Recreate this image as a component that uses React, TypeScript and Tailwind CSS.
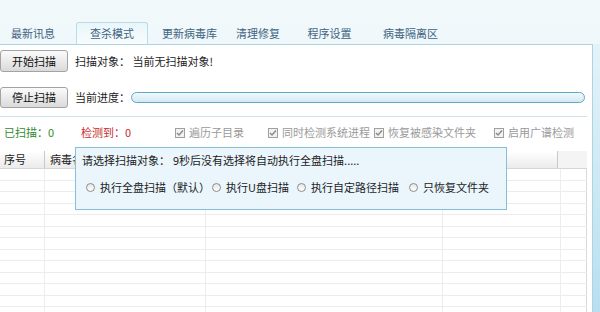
import React from "react";

const font = { fontFamily: '"Noto Sans CJK SC", "Noto Sans", sans-serif' };

// tab widths are tuned so each label sits where the screenshot has it
const tabs = [
  { label: "最新讯息", w: "w-[66px]" },
  { label: "查杀模式", w: "w-[72px] ml-[10px]", active: true },
  { label: "更新病毒库", w: "w-[83px]" },
  { label: "清理修复", w: "w-[54px]" },
  { label: "程序设置", w: "w-[89px]" },
  { label: "病毒隔离区", w: "w-[73px]" },
];

const options = [
  { label: "遍历子目录", w: "w-[93px]" },
  { label: "同时检测系统进程", w: "w-[106px]" },
  { label: "恢复被感染文件夹", w: "w-[120px]" },
  { label: "启用广谱检测", w: "w-[90px]" },
];

const radios = [
  { label: "执行全盘扫描（默认）", w: "w-[126px]" },
  { label: "执行U盘扫描", w: "w-[85px]" },
  { label: "执行自定路径扫描", w: "w-[112px]" },
  { label: "只恢复文件夹", w: "w-[90px]" },
];

const Button = ({ children }: { children: React.ReactNode }) => (
  <button className="h-full w-[68px] shrink-0 rounded-[3px] border border-[#a3a3a3] bg-gradient-to-b from-[#fbfbfb] to-[#dadada] text-[11px] text-[#111]">
    {children}
  </button>
);

const Check = () => (
  <span className="mr-[4px] flex h-[10px] w-[10px] items-center justify-center border border-[#a0a0a0] bg-[#f2f2f2]">
    <svg width="8" height="8" viewBox="0 0 8 8">
      <path d="M1 4 L3 6 L7 1.5" stroke="#8a8a8a" strokeWidth="1.4" fill="none" />
    </svg>
  </span>
);

export default function App() {
  const rows = Array.from({ length: 13 });

  return (
    <div
      style={font}
      className="relative flex h-[312px] w-[600px] flex-col overflow-hidden bg-gradient-to-b from-[#f2f9fb] to-[#d9eef6] text-[11px] text-[#1c1c1c]"
    >
      {/* Tabs */}
      <div className="flex h-[44px] shrink-0 items-end">
        {tabs.map((t) => (
          <div
            key={t.label}
            className={`${t.w} flex h-[22px] items-center justify-center text-[#3f6482] ${
              t.active
                ? "rounded-t-[3px] border border-b-0 border-[#b8dce8] bg-gradient-to-b from-[#e9f6fa] to-[#f8fcfd] text-[#3a6a8a]"
                : ""
            }`}
          >
            {t.label}
          </div>
        ))}
      </div>

      <div className="flex flex-1">
        {/* Main panel */}
        <div className="relative flex w-[593px] flex-col border-r border-t border-[#add4e3] bg-white">
          <div className="mt-[5px] flex h-[22px] items-center">
            <Button>开始扫描</Button>
            <span className="ml-[7px]">扫描对象：&nbsp;当前无扫描对象!</span>
          </div>

          <div className="mt-[15px] flex h-[21px] items-center">
            <Button>停止扫描</Button>
            <span className="ml-[7px] w-[56px]">当前进度：</span>
            <div className="mr-[7px] h-[11px] flex-1 rounded-full border border-[#5ea7c8] bg-gradient-to-b from-[#f2f9fc] to-[#d3e9f3]" />
          </div>

          <div className="mt-[8px] h-px w-[587px] bg-[#cfe5ee]" />

          <div className="flex h-[31px] items-center">
            <span className="w-[81px] pl-[4px] text-[#2f8a2f]">已扫描：0</span>
            <span className="w-[94px] text-[#c42b2b]">检测到：0</span>
            {options.map((o) => (
              <span key={o.label} className={`${o.w} flex items-center text-[#9a9a9a]`}>
                <Check />
                {o.label}
              </span>
            ))}
          </div>

          {/* Table */}
          <div className="mt-[3px] w-[587px]">
            <div className="flex h-[18px] border-b border-[#d6d6d6] bg-gradient-to-b from-[#ffffff] to-[#ebebeb]">
              <div className="flex w-[45px] items-center border-r border-[#c8c8c8] pl-[4px]">序号</div>
              <div className="flex w-[161px] items-center pl-[5px]">
                <span className="w-[25px] overflow-hidden whitespace-nowrap">病毒名称</span>
              </div>
              <div className="w-[237px]" />
              <div className="w-[115px] border-r border-[#c8c8c8]" />
              <div className="flex-1 bg-[#f4f4f4]" />
            </div>
            {rows.map((_, i) => (
              <div key={i} className="flex h-[11.5px] border-b border-[#ececec]">
                <div className="w-[45px] border-r border-[#ededed]" />
                <div className="w-[161px] border-r border-[#ededed]" />
                <div className="w-[237px] border-r border-[#ededed]" />
                <div className="w-[118px] border-r border-[#ededed]" />
                <div className="flex-1 border-r border-[#d8d8d8]" />
              </div>
            ))}
          </div>

          {/* Scan target prompt */}
          <div className="absolute left-[75px] top-[102px] h-[63px] w-[432px] border border-[#86bfd9] bg-[#eaf6fc] px-[6px]">
            <div className="mt-[5px] flex h-[14px] items-center">
              <span className="w-[91px]">请选择扫描对象：</span>
              <span>9秒后没有选择将自动执行全盘扫描.....</span>
            </div>
            <div className="ml-[4px] mt-[13px] flex h-[14px] items-center">
              {radios.map((r) => (
                <span key={r.label} className={`${r.w} flex items-center`}>
                  <span className="mr-[5px] h-[9px] w-[9px] rounded-full border border-[#8c8c8c] bg-gradient-to-b from-[#e6e6e6] to-white" />
                  {r.label}
                </span>
              ))}
            </div>
          </div>
        </div>

        {/* Right frame strip */}
        <div className="flex-1 bg-gradient-to-b from-[#e4f3f8] to-[#b7def0]" />
      </div>
    </div>
  );
}
